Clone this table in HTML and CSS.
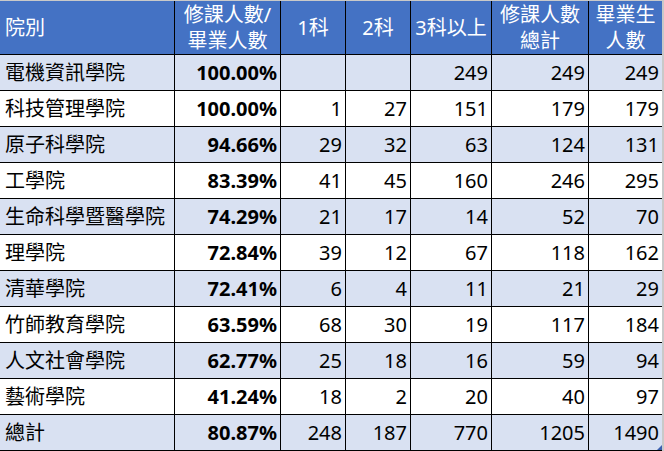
FILE: index.html
```html
<!DOCTYPE html>
<html lang="zh-Hant">
<head>
<meta charset="utf-8">
<title>院別統計</title>
<link rel="stylesheet" href="styles.css">
</head>
<body>
<div class="frame">
  <div class="sheet">
    <div class="row head">
      <div class="c first">院別</div>
      <div class="c mid"><span class="two">修課人數/<br>畢業人數</span></div>
      <div class="c mid">1科</div>
      <div class="c mid">2科</div>
      <div class="c mid">3科以上</div>
      <div class="c mid"><span class="two">修課人數<br>總計</span></div>
      <div class="c mid last"><span class="two">畢業生<br>人數</span></div>
    </div>
    <div class="row alt">
      <div class="c first">電機資訊學院</div><div class="c num pct">100.00%</div><div class="c num"></div><div class="c num"></div><div class="c num">249</div><div class="c num">249</div><div class="c num last">249</div>
    </div>
    <div class="row">
      <div class="c first">科技管理學院</div><div class="c num pct">100.00%</div><div class="c num">1</div><div class="c num">27</div><div class="c num">151</div><div class="c num">179</div><div class="c num last">179</div>
    </div>
    <div class="row alt">
      <div class="c first">原子科學院</div><div class="c num pct">94.66%</div><div class="c num">29</div><div class="c num">32</div><div class="c num">63</div><div class="c num">124</div><div class="c num last">131</div>
    </div>
    <div class="row">
      <div class="c first">工學院</div><div class="c num pct">83.39%</div><div class="c num">41</div><div class="c num">45</div><div class="c num">160</div><div class="c num">246</div><div class="c num last">295</div>
    </div>
    <div class="row alt">
      <div class="c first">生命科學暨醫學院</div><div class="c num pct">74.29%</div><div class="c num">21</div><div class="c num">17</div><div class="c num">14</div><div class="c num">52</div><div class="c num last">70</div>
    </div>
    <div class="row">
      <div class="c first">理學院</div><div class="c num pct">72.84%</div><div class="c num">39</div><div class="c num">12</div><div class="c num">67</div><div class="c num">118</div><div class="c num last">162</div>
    </div>
    <div class="row alt">
      <div class="c first">清華學院</div><div class="c num pct">72.41%</div><div class="c num">6</div><div class="c num">4</div><div class="c num">11</div><div class="c num">21</div><div class="c num last">29</div>
    </div>
    <div class="row">
      <div class="c first">竹師教育學院</div><div class="c num pct">63.59%</div><div class="c num">68</div><div class="c num">30</div><div class="c num">19</div><div class="c num">117</div><div class="c num last">184</div>
    </div>
    <div class="row alt">
      <div class="c first">人文社會學院</div><div class="c num pct">62.77%</div><div class="c num">25</div><div class="c num">18</div><div class="c num">16</div><div class="c num">59</div><div class="c num last">94</div>
    </div>
    <div class="row">
      <div class="c first">藝術學院</div><div class="c num pct">41.24%</div><div class="c num">18</div><div class="c num">2</div><div class="c num">20</div><div class="c num">40</div><div class="c num last">97</div>
    </div>
    <div class="row alt">
      <div class="c first">總計</div><div class="c num pct">80.87%</div><div class="c num">248</div><div class="c num">187</div><div class="c num">770</div><div class="c num">1205</div><div class="c num last handle-cell">1490<span class="handle"></span></div>
    </div>
  </div>
</div>
</body>
</html>
```

FILE: styles.css
```css
html, body {
  margin: 0;
  padding: 0;
  background: #ffffff;
}

body {
  font-family: "Noto Sans", "Noto Sans CJK TC", sans-serif;
  font-size: 20px;
  color: #000000;
}

.frame {
  width: 664px;
  height: 451px;
  box-sizing: border-box;
  border-top: 1px solid #c9c9c9;
  overflow: hidden;
}

.sheet {
  width: 664px;
  box-sizing: border-box;
  border-right: 2px solid #c9c9c9;
}

.row {
  display: grid;
  grid-template-columns: 175px 106px 65px 65px 81px 97px 73px;
  height: 36px;
  background: #ffffff;
}

.row.alt {
  background: #d9e1f2;
}

.row.head {
  height: 54px;
  background: #4472c4;
  color: #ffffff;
}

.c {
  box-sizing: border-box;
  border-right: 1px solid #000000;
  border-bottom: 1px solid #000000;
  display: flex;
  align-items: center;
  white-space: nowrap;
  line-height: 28px;
}

.c.last {
  border-right: none;
}

.two {
  display: block;
  line-height: 26px;
}

.first {
  padding-left: 5px;
}

.mid {
  justify-content: center;
  text-align: center;
}

.num {
  justify-content: flex-end;
  padding-right: 3px;
}

.pct {
  font-weight: 700;
}

.handle-cell {
  position: relative;
}

.handle {
  position: absolute;
  right: 0;
  bottom: 0;
  width: 5px;
  height: 5px;
  background: #3b5fae;
  clip-path: polygon(100% 0, 100% 100%, 0 100%);
}
```
